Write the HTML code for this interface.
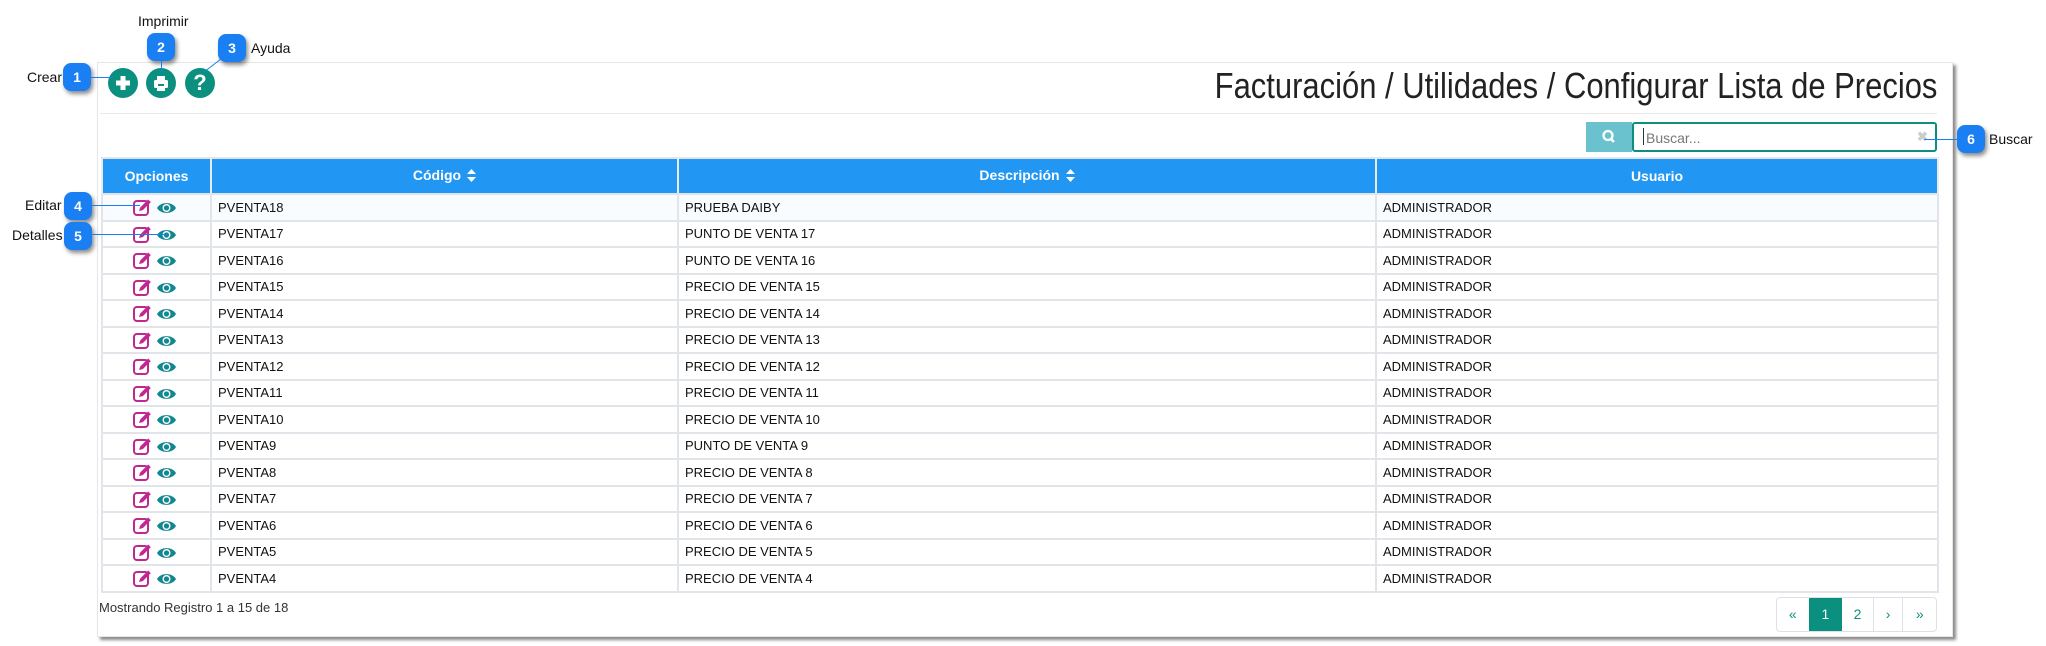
<!DOCTYPE html>
<html><head><meta charset="utf-8"><style>
*{box-sizing:border-box;margin:0;padding:0}
body{width:2046px;height:646px;background:#fff;position:relative;overflow:hidden;font-family:"Liberation Sans",Arial,sans-serif}
.a{position:absolute}
.lbl{position:absolute;font-size:14px;color:#111;line-height:16px}
.badge{position:absolute;width:28px;height:28px;border-radius:8px;background:#1a7ff2;color:#fff;font-size:14px;font-weight:bold;text-align:center;line-height:28px;box-shadow:2px 3px 4px rgba(0,0,0,.45)}
.ln{position:absolute;background:#1a7ff2;height:1px}
.panel{left:97px;top:62px;width:1856px;height:575px;border:1px solid #e6e6e6;background:#fff;box-shadow:3px 3px 3px #8a8a8a}
.circ{position:absolute;width:30px;height:30px;border-radius:50%;background:#0b9080}
table{position:absolute;left:101px;top:157px;border-collapse:collapse;font-size:13px;color:#111}
td,th{border:2px solid #e1e4e8;height:26.5px;padding:0 0 0 6px;white-space:nowrap}
th{background:#2196f3;color:#fff;height:36px;font-weight:bold;font-size:14px;text-align:center;border-color:#e1e4e8 #e9ecef}
td.o{text-align:center;padding:0}
tr.f td{background:#f8fcfe}
.sort{display:inline-block;vertical-align:middle;margin-left:6px}
</style></head><body>
<div class="a panel"></div>
<div class="a" style="left:100px;top:113px;width:1837px;height:1px;background:#e8e8e8"></div>

<div class="circ" style="left:108px;top:68px"><svg width="30" height="30"><rect x="8" y="12.5" width="14" height="5" fill="#fff"/><rect x="12.5" y="8" width="5" height="14" fill="#fff"/></svg></div>
<div class="circ" style="left:146px;top:68px"><svg width="30" height="30"><rect x="11" y="8" width="8" height="5" fill="#fff"/><rect x="8" y="12" width="14" height="8" rx="1.5" fill="#fff"/><rect x="11" y="18" width="8" height="5" fill="#fff"/><rect x="12" y="16" width="6" height="2" fill="#0b9080"/></svg></div>
<div class="circ" style="left:185px;top:68px;color:#fff;font-weight:bold;font-size:22px;text-align:center;line-height:30px">?</div>

<div class="a" style="right:109px;top:65px;font-size:36px;line-height:42px;color:#222;white-space:nowrap"><span style="display:inline-block;transform:scaleX(0.86);transform-origin:right">Facturación / Utilidades / Configurar Lista de Precios</span></div>

<div class="a" style="left:1586px;top:122px;width:46px;height:30px;background:#6ac2cf"><svg width="46" height="30"><circle cx="22" cy="13.5" r="4.5" fill="none" stroke="#fff" stroke-width="2.3"/><line x1="25" y1="17" x2="28" y2="20" stroke="#fff" stroke-width="2.5"/></svg></div>
<div class="a" style="left:1632px;top:122px;width:305px;height:30px;border:2px solid #0b9080;border-radius:3px;font-size:14px;color:#777;padding:6px 0 0 12px">Buscar...</div>
<div class="a" style="left:1643px;top:128px;width:1px;height:17px;background:#333"></div>
<div class="a" style="left:1917px;top:129px;color:#ccc;font-size:13px;font-weight:bold">✖</div>

<table>
<tr><th style="width:109px;padding:0">Opciones</th><th style="width:467px;padding:0">Código<span class="sort"><svg width="9" height="13"><path d="M4.5 0L9 5H0Z M4.5 13L9 8H0Z" fill="#fff"/></svg></span></th><th style="width:698px;padding:0">Descripción<span class="sort"><svg width="9" height="13"><path d="M4.5 0L9 5H0Z M4.5 13L9 8H0Z" fill="#fff"/></svg></span></th><th style="width:562px;padding:0">Usuario</th></tr>
</table>

<div class="a" style="left:99px;top:600px;font-size:13px;color:#333">Mostrando Registro 1 a 15 de 18</div>

<div class="a" style="left:1776px;top:597px;height:35px;width:161px;border:1px solid #dde1e6;border-radius:4px;display:flex;font-size:14px;color:#0b9080;overflow:hidden">
<div style="width:32px;text-align:center;line-height:33px">«</div>
<div style="width:34px;text-align:center;line-height:33px;background:#0b9080;color:#fff">1</div>
<div style="width:32px;text-align:center;line-height:33px;border-right:1px solid #dde1e6">2</div>
<div style="width:30px;text-align:center;line-height:33px;border-right:1px solid #dde1e6">›</div>
<div style="width:33px;text-align:center;line-height:33px">»</div>
</div>

<div class="lbl" style="left:27px;top:69px">Crear</div>
<div class="badge" style="left:63px;top:63px">1</div>
<div class="ln" style="left:91px;top:77px;width:22px"></div>
<div class="lbl" style="left:138px;top:13px">Imprimir</div>
<div class="badge" style="left:147px;top:33px">2</div>
<div class="ln" style="left:161px;top:61px;width:1px;height:12px"></div>
<div class="lbl" style="left:251px;top:40px">Ayuda</div>
<div class="badge" style="left:218px;top:34px">3</div>
<svg class="a" style="left:200px;top:58px" width="24" height="16"><line x1="21" y1="1" x2="4" y2="14" stroke="#1a7ff2"/></svg>
<div class="lbl" style="left:25px;top:197px">Editar</div>
<div class="badge" style="left:64px;top:192px">4</div>
<div class="ln" style="left:92px;top:205px;width:48px"></div>
<div class="lbl" style="left:12px;top:227px">Detalles</div>
<div class="badge" style="left:64px;top:222px">5</div>
<div class="ln" style="left:92px;top:234px;width:76px"></div>
<div class="badge" style="left:1957px;top:125px">6</div>
<div class="ln" style="left:1924px;top:139px;width:33px"></div>
<div class="lbl" style="left:1989px;top:131px">Buscar</div>

<script>
var rows=[["PVENTA18","PRUEBA DAIBY"],["PVENTA17","PUNTO DE VENTA 17"],["PVENTA16","PUNTO DE VENTA 16"],["PVENTA15","PRECIO DE VENTA 15"],["PVENTA14","PRECIO DE VENTA 14"],["PVENTA13","PRECIO DE VENTA 13"],["PVENTA12","PRECIO DE VENTA 12"],["PVENTA11","PRECIO DE VENTA 11"],["PVENTA10","PRECIO DE VENTA 10"],["PVENTA9","PUNTO DE VENTA 9"],["PVENTA8","PRECIO DE VENTA 8"],["PVENTA7","PRECIO DE VENTA 7"],["PVENTA6","PRECIO DE VENTA 6"],["PVENTA5","PRECIO DE VENTA 5"],["PVENTA4","PRECIO DE VENTA 4"]];
var ic='<svg width="50" height="20" style="vertical-align:middle"><rect x="2" y="4" width="14" height="14" rx="3" fill="none" stroke="#c0288f" stroke-width="2"/><path d="M7 14l1.2-3.5 8-8 2.6 2.6-8 8z" fill="#c0288f"/><path d="M25 11c3.5-6.5 15.5-6.5 19 0c-3.5 6.5-15.5 6.5-19 0z" fill="#11878f"/><circle cx="34.5" cy="11" r="4" fill="#fff"/><circle cx="34.5" cy="11" r="2.6" fill="#11878f"/></svg>';
var t=document.querySelector("table"),h="";
rows.forEach(function(r,i){h+='<tr'+(i==0?' class="f"':'')+'><td class="o">'+ic+'</td><td>'+r[0]+'</td><td>'+r[1]+'</td><td>ADMINISTRADOR</td></tr>';});
t.insertAdjacentHTML("beforeend",h);
</script>
</body></html>
